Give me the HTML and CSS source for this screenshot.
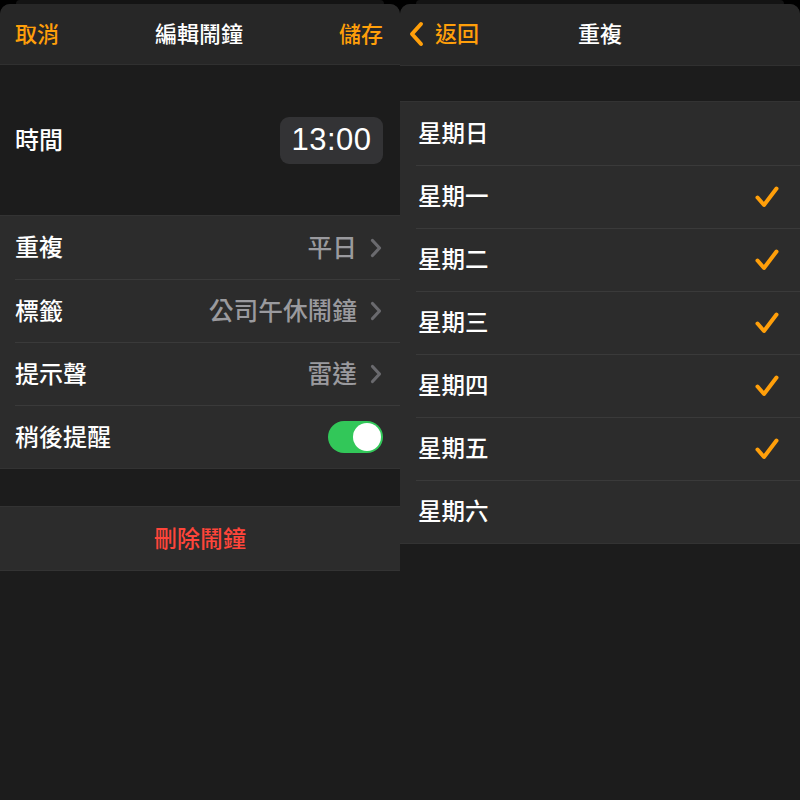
FILE: index.html
```html
<!DOCTYPE html>
<html lang="zh-Hant">
<head>
  <meta charset="UTF-8">
  <title>編輯鬧鐘</title>
  <link rel="stylesheet" href="styles.css">
</head>
<body>
  <div class="screens">
    <!-- edit alarm -->
    <div class="screen">
      <div class="card-behind"></div>
      <div class="sheet">
        <div class="nav">
          <span class="nav-btn">取消</span>
          <span class="nav-title">編輯鬧鐘</span>
          <span class="nav-btn">儲存</span>
        </div>
        <div class="time-row">
          <span class="label">時間</span>
          <span class="time-box">13:00</span>
        </div>
        <div class="group">
          <div class="row">
            <span class="label">重複</span>
            <span class="value">平日<svg class="chevron" width="12" height="20" viewBox="0 0 12 20"><path d="M2.5 2.5 L9.5 10 L2.5 17.5" fill="none" stroke="#6a6a6e" stroke-width="3.2" stroke-linecap="round" stroke-linejoin="round"/></svg></span>
          </div>
          <div class="row">
            <span class="label">標籤</span>
            <span class="value">公司午休鬧鐘<svg class="chevron" width="12" height="20" viewBox="0 0 12 20"><path d="M2.5 2.5 L9.5 10 L2.5 17.5" fill="none" stroke="#6a6a6e" stroke-width="3.2" stroke-linecap="round" stroke-linejoin="round"/></svg></span>
          </div>
          <div class="row">
            <span class="label">提示聲</span>
            <span class="value">雷達<svg class="chevron" width="12" height="20" viewBox="0 0 12 20"><path d="M2.5 2.5 L9.5 10 L2.5 17.5" fill="none" stroke="#6a6a6e" stroke-width="3.2" stroke-linecap="round" stroke-linejoin="round"/></svg></span>
          </div>
          <div class="row">
            <span class="label">稍後提醒</span>
            <span class="toggle"><span class="knob"></span></span>
          </div>
        </div>
        <div class="group delete-group">
          <div class="row delete-row">刪除鬧鐘</div>
        </div>
      </div>
    </div>

    <!-- repeat days -->
    <div class="screen">
      <div class="card-behind"></div>
      <div class="sheet">
        <div class="nav nav-back">
          <span class="nav-btn back">
            <svg width="18" height="26" viewBox="0 0 18 26"><path d="M13 3 L4 13 L13 23" fill="none" stroke="#ff9f0a" stroke-width="4" stroke-linecap="round" stroke-linejoin="round"/></svg>
            返回
          </span>
          <span class="nav-title">重複</span>
          <span class="nav-btn spacer"></span>
        </div>
        <div class="group days">
          <div class="row day"><span class="label">星期日</span></div>
          <div class="row day"><span class="label">星期一</span><svg class="check" width="26" height="24" viewBox="0 0 26 24"><path d="M3.5 12.5 L10 20 L22.5 3.5" fill="none" stroke="#ff9f0a" stroke-width="4" stroke-linecap="round" stroke-linejoin="round"/></svg></div>
          <div class="row day"><span class="label">星期二</span><svg class="check" width="26" height="24" viewBox="0 0 26 24"><path d="M3.5 12.5 L10 20 L22.5 3.5" fill="none" stroke="#ff9f0a" stroke-width="4" stroke-linecap="round" stroke-linejoin="round"/></svg></div>
          <div class="row day"><span class="label">星期三</span><svg class="check" width="26" height="24" viewBox="0 0 26 24"><path d="M3.5 12.5 L10 20 L22.5 3.5" fill="none" stroke="#ff9f0a" stroke-width="4" stroke-linecap="round" stroke-linejoin="round"/></svg></div>
          <div class="row day"><span class="label">星期四</span><svg class="check" width="26" height="24" viewBox="0 0 26 24"><path d="M3.5 12.5 L10 20 L22.5 3.5" fill="none" stroke="#ff9f0a" stroke-width="4" stroke-linecap="round" stroke-linejoin="round"/></svg></div>
          <div class="row day"><span class="label">星期五</span><svg class="check" width="26" height="24" viewBox="0 0 26 24"><path d="M3.5 12.5 L10 20 L22.5 3.5" fill="none" stroke="#ff9f0a" stroke-width="4" stroke-linecap="round" stroke-linejoin="round"/></svg></div>
          <div class="row day"><span class="label">星期六</span></div>
        </div>
      </div>
    </div>
  </div>
</body>
</html>
```

FILE: styles.css
```css
* {
  margin: 0;
  padding: 0;
  box-sizing: border-box;
}

body {
  background: #000;
  font-family: "Noto Sans CJK TC", "Noto Sans", sans-serif;
  color: #fff;
  width: 800px;
  height: 800px;
  overflow: hidden;
}

.screens {
  display: grid;
  grid-template-columns: 400px 400px;
  height: 800px;
}

.screen {
  display: flex;
  flex-direction: column;
  background: #000;
  overflow: hidden;
}

.card-behind {
  height: 4px;
  margin: 0 16px;
  background: #141414;
  border-radius: 8px 8px 0 0;
  flex-shrink: 0;
}

.sheet {
  flex: 1;
  background: #1c1c1c;
  border-radius: 10px 10px 0 0;
  overflow: hidden;
}

.nav {
  height: 61px;
  background: #272727;
  border-bottom: 1px solid #303030;
  display: flex;
  align-items: center;
  justify-content: space-between;
  padding: 0 17px 5px 15px;
}

.nav-btn {
  color: #ff9f0a;
  font-size: 22px;
  font-weight: 500;
  width: 60px;
}

.nav-btn:last-child {
  text-align: right;
}

.nav-title {
  font-size: 22px;
  font-weight: 500;
  color: #fff;
}

.nav-back {
  height: 62px;
  padding-left: 8px;
  padding-right: 8px;
  margin-bottom: 35px;
}

.back {
  display: flex;
  align-items: center;
  gap: 9px;
  width: 90px;
}

.back svg {
  margin-top: 3px;
}

.spacer {
  width: 90px;
}

.label {
  font-size: 24px;
  font-weight: 500;
  color: #fff;
}

.time-row {
  height: 150px;
  display: flex;
  align-items: center;
  justify-content: space-between;
  padding: 0 17px 0 15px;
}

.time-row .label {
  margin-top: -4px;
}

.time-box {
  background: #333335;
  border-radius: 9px;
  width: 103px;
  height: 47px;
  display: flex;
  align-items: center;
  justify-content: center;
  font-family: "Liberation Sans", Arial, sans-serif;
  font-size: 31px;
  letter-spacing: 0.5px;
}

.group {
  background: #2c2c2c;
  border-top: 1px solid #333;
  border-bottom: 1px solid #333;
  padding-left: 15px;
}

.row {
  height: 63px;
  display: flex;
  align-items: center;
  justify-content: space-between;
  padding-right: 18px;
  padding-bottom: 4px;
  border-top: 1px solid #3a3a3a;
}

.row:first-child {
  border-top: none;
}

.value {
  display: flex;
  align-items: center;
  color: #9a9a9e;
  font-size: 24.7px;
  font-weight: 500;
}

.chevron {
  margin-left: 13px;
  margin-top: 4px;
}

.toggle {
  width: 55px;
  height: 32px;
  border-radius: 16px;
  background: #32c759;
  display: flex;
  align-items: center;
  justify-content: flex-end;
  padding: 2px;
  margin-top: 4px;
  margin-right: -1px;
}

.knob {
  width: 28px;
  height: 28px;
  border-radius: 50%;
  background: #fff;
}

.delete-group {
  margin-top: 37px;
  padding-left: 0;
}

.delete-row {
  justify-content: center;
  padding-right: 0;
  color: #ff453a;
  font-size: 23px;
  font-weight: 500;
}

.days {
  padding-left: 16px;
}

.day {
  padding-left: 2px;
  padding-right: 20px;
}

.day .label {
  font-size: 23.5px;
}

.check {
  margin-top: 3px;
}
```
